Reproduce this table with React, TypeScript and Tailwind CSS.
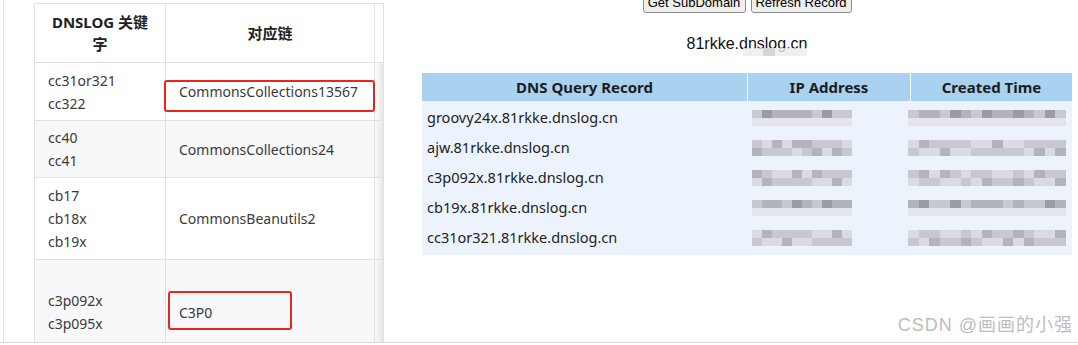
import React from "react";

const leftRows = [
  { keys: ["cc31or321", "cc322"], chain: "CommonsCollections13567", h: "h-[58px]", bg: "bg-white", box: "left-[-2px] top-[17px] w-[211px] h-[32px]" },
  { keys: ["cc40", "cc41"], chain: "CommonsCollections24", h: "h-[57px]", bg: "bg-[#f6f8fa]", box: "" },
  { keys: ["cb17", "cb18x", "cb19x"], chain: "CommonsBeanutils2", h: "h-[82px]", bg: "bg-white", box: "" },
  { keys: ["c3p092x", "c3p095x"], chain: "C3P0", h: "h-[105px]", bg: "bg-[#f6f8fa]", box: "left-[2px] top-[31px] w-[124px] h-[39px]" },
];

const records = [
  "groovy24x.81rkke.dnslog.cn",
  "ajw.81rkke.dnslog.cn",
  "c3p092x.81rkke.dnslog.cn",
  "cb19x.81rkke.dnslog.cn",
  "cc31or321.81rkke.dnslog.cn",
];

const shades = ["bg-[#dadae2]", "bg-[#c8c8d0]", "bg-[#b3b3bb]", "bg-[#9b9ba3]"];

function shade(row: number, sub: number, col: number, seed: number) {
  const n = (row * 31 + sub * 17 + col * 7 + seed * 13 + ((col * col) % 5) * 3) % 9;
  if (row === 0 || row === 3) {
    if (sub === 1) return "bg-[#e4e5ec]";
    return shades[[1, 2, 3, 2, 1, 3, 2, 1, 2][n]];
  }
  return shades[[0, 1, 0, 2, 1, 0, 1, 2, 1][n]];
}

const Mosaic = ({ row, cols, seed, width }: { row: number; cols: number; seed: number; width: string }) => (
  <div className={`flex flex-col ${width}`}>
    {[0, 1].map((sub) => (
      <div key={sub} className="flex h-[8px]">
        {Array.from({ length: cols }).map((_, c) => (
          <div key={c} className={`flex-1 ${shade(row, sub, c, seed)}`}></div>
        ))}
      </div>
    ))}
  </div>
);

export default function App() {
  return (
    <div className="w-[1078px] h-[345px] bg-white overflow-hidden flex flex-col font-['Noto_Sans','Noto_Sans_CJK_SC',sans-serif]">
      <div className="h-[343px] flex overflow-hidden border-b border-[#d9d9d9]">
        {/* left: markdown table */}
        <div className="w-[384px] shrink-0 pl-[3px] flex">
          <div className="flex-1 border-l border-[#e3e3e3] pl-[30px] pt-[3px]">
            <div className="border-t border-l border-[#dfe2e5] text-[#3a3a3a] text-[14px]">
              <div className="grid grid-cols-[131px_209px_9px] h-[59px] bg-white">
                <div className="border-r border-b border-[#dfe2e5] flex items-center justify-center px-[13px] text-center text-[15px] font-bold leading-[22px] text-[#222]">
                  DNSLOG 关键字
                </div>
                <div className="border-r border-b border-[#dfe2e5] flex items-center justify-center text-[15px] font-bold text-[#222]">
                  对应链
                </div>
                <div className="border-r border-b border-[#dfe2e5]"></div>
              </div>
              {leftRows.map((r, i) => (
                <div key={i} className={`grid grid-cols-[131px_209px_9px] ${r.h} ${r.bg}`}>
                  <div className="border-r border-b border-[#dfe2e5] flex flex-col justify-center px-[13px] leading-[23px]">
                    {r.keys.map((k) => (
                      <div key={k}>{k}</div>
                    ))}
                  </div>
                  <div className="relative border-r border-b border-[#dfe2e5] flex items-center px-[13px]">
                    {r.chain}
                    {r.box && <div className={`absolute ${r.box} border-2 border-[#e8261e] rounded-[3px]`}></div>}
                  </div>
                  <div className="border-r border-b border-[#dfe2e5] bg-gradient-to-r from-transparent to-[#e6e7e9]"></div>
                </div>
              ))}
            </div>
          </div>
        </div>

        {/* right: dnslog page */}
        <div className="flex-1 flex flex-col">
          <div className="ml-[38px] w-[650px] flex flex-col items-center">
            <div className="-mt-[7px] flex gap-[5px] font-['Liberation_Sans',sans-serif] text-[13px] text-black">
              <button className="h-[20px] w-[103px] bg-[#efefef] border border-[#8d8d8d] rounded-[3px] leading-[14px]">Get SubDomain</button>
              <button className="h-[20px] w-[101px] bg-[#efefef] border border-[#8d8d8d] rounded-[3px] leading-[14px]">Refresh Record</button>
            </div>
            <div className="relative mt-[22px] h-[18px] leading-[18px] font-['Liberation_Sans',sans-serif] text-[16px] text-[#111]">
              81rkke.dnslog.cn
              <div className="absolute left-[56px] top-[13px] w-[64px] h-[8px] bg-[#ececef] opacity-80"></div>
              <div className="absolute left-[76px] top-[13px] w-[12px] h-[8px] bg-[#d6d6db]"></div>
            </div>
            <div className="mt-[20px] w-full">
              <div className="grid grid-cols-[325px_163px_162px] h-[28px] bg-[#a9d1f0] text-[15px] font-bold text-[#1c1c1c]">
                <div className="flex items-center justify-center">DNS Query Record</div>
                <div className="flex items-center justify-center border-l border-white">IP Address</div>
                <div className="flex items-center justify-center border-l border-white">Created Time</div>
              </div>
              <div className="bg-[#edf3fc] py-[2px] text-[14.5px] text-[#222]">
                {records.map((rec, i) => (
                  <div key={rec} className="grid grid-cols-[325px_163px_162px] h-[30px] items-center">
                    <div className="pl-[5px]">{rec}</div>
                    <div className="pl-[5px]">
                      <Mosaic row={i} cols={10} seed={1} width="w-[100px]" />
                    </div>
                    <div className="-ml-[2px]">
                      <Mosaic row={i} cols={15} seed={4} width="w-[158px]" />
                    </div>
                  </div>
                ))}
              </div>
            </div>
          </div>
          <div className="mt-auto mb-[3px] pr-[5px] text-right text-[18px] tracking-[1px] text-[#bdbdbd] font-['Liberation_Sans','Noto_Sans_CJK_SC',sans-serif]">
            CSDN @画画的小强
          </div>
        </div>
      </div>
    </div>
  );
}
